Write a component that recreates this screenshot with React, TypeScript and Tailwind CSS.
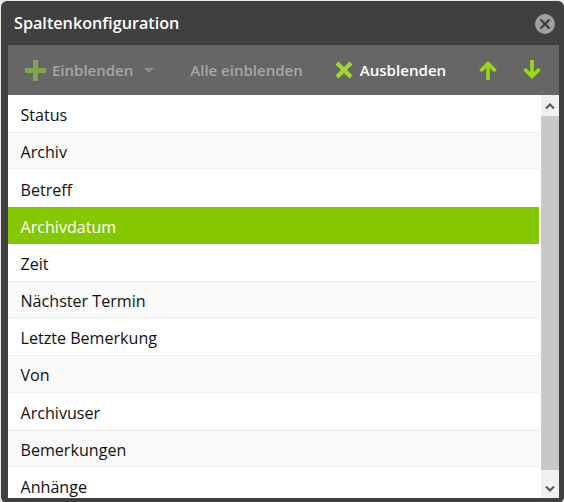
import React from "react";

const columns = [
  "Status",
  "Archiv",
  "Betreff",
  "Archivdatum",
  "Zeit",
  "Nächster Termin",
  "Letzte Bemerkung",
  "Von",
  "Archivuser",
  "Bemerkungen",
  "Anhänge",
];

const PlusIcon = () => (
  <svg width="21" height="21" viewBox="0 0 21 21">
    <path d="M8 0h5v8h8v5h-8v8H8v-8H0V8h8z" fill="#7fa64f" />
  </svg>
);

const CrossIcon = () => (
  <svg width="18" height="18" viewBox="0 0 18 18">
    <path d="M3.5 0.5L9 6l5.5-5.5 3 3L12 9l5.5 5.5-3 3L9 12l-5.5 5.5-3-3L6 9 .5 3.5z" fill="#9edb2a" />
  </svg>
);

const ArrowUp = () => (
  <svg width="18" height="20" viewBox="0 0 18 20" fill="none" stroke="#96dc14" strokeWidth="3.6">
    <path d="M9 20V3.5M1.5 11L9 3.5l7.5 7.5" />
  </svg>
);

const ArrowDown = () => (
  <svg width="18" height="20" viewBox="0 0 18 20" fill="none" stroke="#96dc14" strokeWidth="3.6">
    <path d="M9 0v16.5M1.5 9L9 16.5 16.5 9" />
  </svg>
);

const App: React.FC = () => {
  return (
    <div className="w-[564px] h-[502px] bg-[#e8e8e8] overflow-hidden font-['Open_Sans',sans-serif]">
      <div className="w-[563px] h-[502px] mt-px ml-px bg-[#404040] rounded-[6px] pl-[7px] pr-[5px] pb-[5px] flex flex-col">
        <div className="h-[44px] shrink-0 flex items-center justify-between">
          <span className="text-white text-[16.2px] font-semibold ml-[6px]">Spaltenkonfiguration</span>
          <svg width="20" height="20" viewBox="0 0 20 20" className="mr-[4px] mt-[1px]">
            <circle cx="10" cy="10" r="10" fill="#a0a0a0" />
            <path d="M5.5 5.5l9 9M14.5 5.5l-9 9" stroke="#404040" strokeWidth="2.4" />
          </svg>
        </div>
        <div className="h-[50px] shrink-0 bg-[#666666] flex items-center text-[15px] font-semibold">
          <div className="ml-[17px] flex items-center gap-[6px] text-[#a6a6a6]">
            <PlusIcon />
            <span>Einblenden</span>
          </div>
          <div className="ml-[11px] w-0 h-0 border-x-[5px] border-x-transparent border-t-[5px] border-t-[#8c8c8c]" />
          <span className="ml-[36px] text-[#a6a6a6]">Alle einblenden</span>
          <div className="ml-[32px] flex items-center gap-[7px] text-white">
            <CrossIcon />
            <span className="text-[15.1px]">Ausblenden</span>
          </div>
          <div className="ml-[33px]">
            <ArrowUp />
          </div>
          <div className="ml-[26px]">
            <ArrowDown />
          </div>
        </div>
        <div className="flex-1 min-h-0 flex bg-white overflow-hidden">
          <div className="flex-1 min-w-0 overflow-hidden">
            {columns.map((name, i) => (
              <div
                key={name}
                className={
                  name === "Archivdatum"
                    ? "h-[37.2px] flex items-center pl-[12.5px] pt-[3.3px] text-[16.1px] bg-[#86c800] text-white"
                    : i % 2 === 1
                      ? "h-[37.2px] flex items-center pl-[12.5px] pt-[3.3px] text-[16.1px] text-[#111111] bg-[#fafafa] border-y border-[#eeeeee]"
                      : "h-[37.2px] flex items-center pl-[12.5px] pt-[3.3px] text-[16.1px] text-[#111111] bg-white"
                }
              >
                {name}
              </div>
            ))}
          </div>
          <div className="w-[18px] ml-[2px] shrink-0 flex flex-col bg-[#c8c8c8]">
            <div className="h-[21px] bg-[#f0f0f0] flex items-center justify-center">
              <svg width="10" height="6" viewBox="0 0 10 6" fill="none" stroke="#555555" strokeWidth="2">
                <path d="M1 5.5l4-4 4 4" />
              </svg>
            </div>
            <div className="flex-1" />
            <div className="h-[28px] bg-[#f0f0f0] flex items-end justify-center pb-[6px]">
              <svg width="10" height="6" viewBox="0 0 10 6" fill="none" stroke="#555555" strokeWidth="2">
                <path d="M1 .5l4 4 4-4" />
              </svg>
            </div>
          </div>
        </div>
      </div>
    </div>
  );
};

export default App;
